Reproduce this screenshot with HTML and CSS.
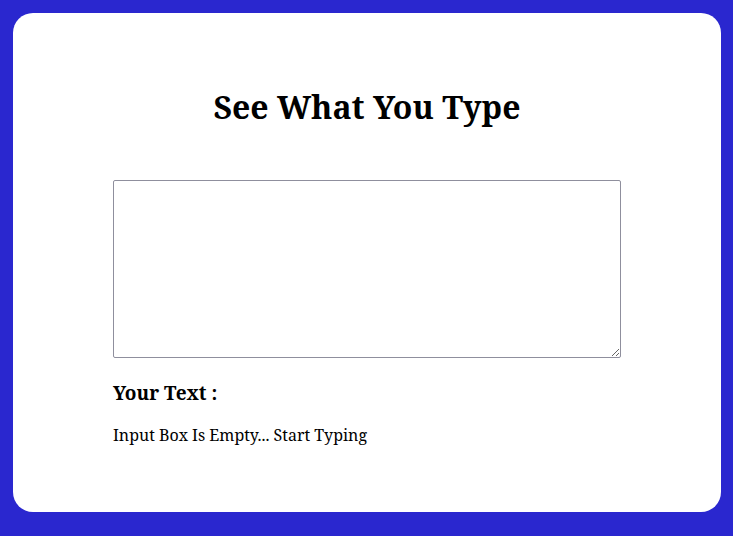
FILE: index.html
```html
<!DOCTYPE html>
<html>
<head>
<meta charset="utf-8">
<link rel="stylesheet" href="styles.css">
</head>
<body>
<div class="card">
  <h1 class="title">See What You Type</h1>
  <div class="content">
    <textarea class="input"></textarea>
    <h3 class="label">Your Text :</h3>
    <p class="output">Input Box Is Empty... Start Typing</p>
  </div>
</div>
</body>
</html>
```
FILE: styles.css
```css
html, body {
  margin: 0;
  height: 100%;
}
body {
  background: #2a27cf;
  padding: 13px 12px 24px 13px;
  box-sizing: border-box;
  font-family: "Noto Serif", "DejaVu Serif", serif;
}
.card {
  background: #fff;
  border-radius: 20px;
  height: 499px;
  box-sizing: border-box;
  padding-top: 1px;
}
.title {
  text-align: center;
  font-size: 32px;
  margin: 73px 0 0;
  line-height: 40px;
}
.content {
  width: 508px;
  margin: 53px auto 0 100px;
}
.input {
  display: block;
  width: 508px;
  height: 178px;
  box-sizing: border-box;
  border: 1px solid #8f8f9d;
  border-radius: 2px;
  margin: 0;
  resize: vertical;
}
.label {
  font-size: 19px;
  margin: 23px 0 0;
  line-height: 24px;
}
.output {
  font-size: 16px;
  margin: 19px 0 0;
  line-height: 22px;
}
```
